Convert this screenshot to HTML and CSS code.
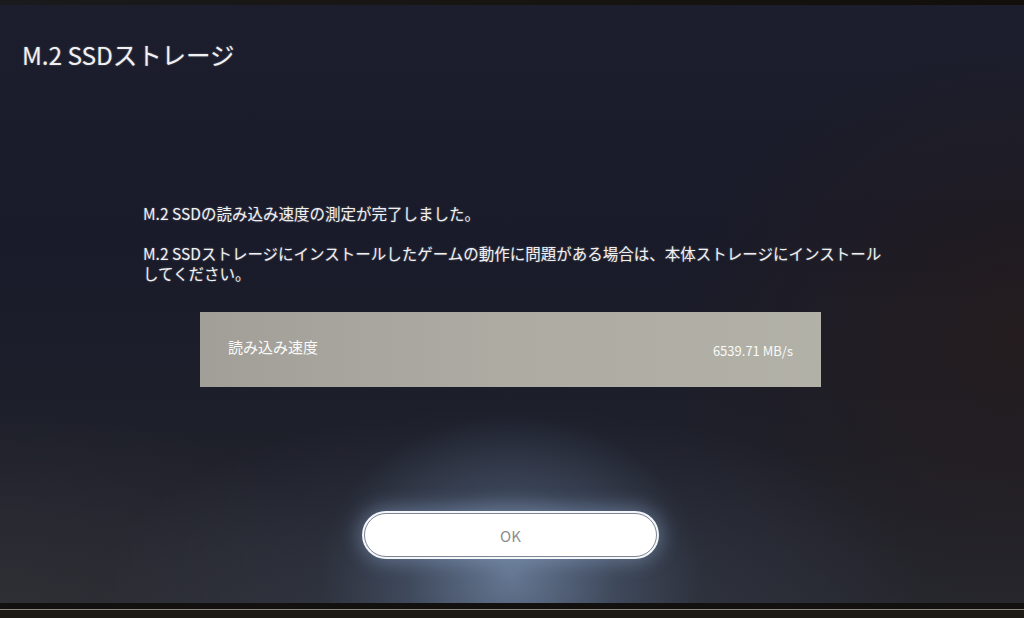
FILE: index.html
```html
<!DOCTYPE html>
<html lang="ja">

<head>
    <meta charset="UTF-8">
    <meta name="viewport" content="width=device-width, initial-scale=1.0">
    <title>M.2 SSDストレージ</title>
    <link rel="stylesheet" href="styles.css">
</head>

<body>
    <div class="bezel-top"></div>

    <div class="screen">
        <h1 class="title">M.2 SSDストレージ</h1>

        <div class="message">
            <p>M.2 SSDの読み込み速度の測定が完了しました。</p>
            <p>M.2 SSDストレージにインストールしたゲームの動作に問題がある場合は、本体ストレージにインストールしてください。</p>
        </div>

        <div class="result">
            <span class="result-label">読み込み速度</span>
            <span class="result-value">6539.71 MB/s</span>
        </div>

        <button class="ok-button" type="button">OK</button>
    </div>

    <div class="bezel-bottom"></div>
</body>

</html>
```

FILE: styles.css
```css
html,
body {
    margin: 0;
    height: 100%;
    overflow: hidden;
}

body {
    background: #13120f;
    font-family: "Noto Sans CJK JP", "Noto Sans", sans-serif;
    color: #f1f1f3;
}

.bezel-top {
    height: 5px;
    background: linear-gradient(to right, #1a1a1c, #16140f 60%, #120f0b);
}

.screen {
    height: 598px;
    box-sizing: border-box;
    padding-top: 34px;
    background:
        radial-gradient(ellipse 190px 160px at 511px 570px, rgba(118, 140, 172, 0.75), rgba(90, 110, 140, 0.35) 55%, rgba(60, 70, 90, 0) 100%),
        radial-gradient(ellipse 420px 200px at 511px 600px, rgba(80, 96, 122, 0.35), rgba(40, 46, 60, 0) 100%),
        radial-gradient(ellipse 360px 300px at 1024px 330px, rgba(40, 28, 26, 0.7), rgba(30, 26, 34, 0) 100%),
        radial-gradient(ellipse 360px 200px at 0 600px, rgba(52, 52, 58, 0.6), rgba(40, 40, 48, 0) 100%),
        linear-gradient(to bottom, #1c1e2d 0%, #191b2a 40%, #1d1f2a 70%, #26272e 100%);
}

.title {
    margin: 0 0 0 22px;
    font-size: 24.5px;
    font-weight: 400;
    line-height: 32px;
    letter-spacing: -0.1px;
    text-shadow: 0 0 2px rgba(255, 255, 255, 0.35);
}

.message {
    margin: 132px 0 0 143px;
    width: 745px;
    font-size: 15.5px;
    line-height: 20px;
    text-shadow: 0 0 2px rgba(255, 255, 255, 0.35);
}

.message p {
    margin: 0 0 20px;
}

.message p:last-child {
    margin-bottom: 0;
}

.result {
    display: flex;
    justify-content: space-between;
    align-items: center;
    width: 621px;
    height: 75px;
    margin: 29px 0 0 200px;
    box-sizing: border-box;
    padding: 0 28px 0 28px;
    background: linear-gradient(to right, #a29f98, #adaba2 50%, #b2b1a7);
    color: #fafaf8;
}

.result-label {
    font-size: 15px;
    margin-top: -6px;
}

.result-value {
    font-size: 13px;
    margin-top: 2px;
}

.ok-button {
    display: block;
    width: 293px;
    height: 44px;
    margin: 126px 0 0 364px;
    border: 1.5px solid #7f8591;
    border-radius: 22px;
    background: #ffffff;
    box-shadow: 0 0 0 2px #f3f6fb, 0 0 18px 6px rgba(160, 190, 230, 0.35);
    font-family: "Noto Sans CJK JP", "Noto Sans", sans-serif;
    font-size: 15px;
    color: #8d8d8d;
}

.bezel-bottom {
    height: 15px;
    box-sizing: border-box;
    border-top: 6px solid #121110;
    border-bottom: 8px solid #1d1a16;
    background: #8a8780;
}
```
